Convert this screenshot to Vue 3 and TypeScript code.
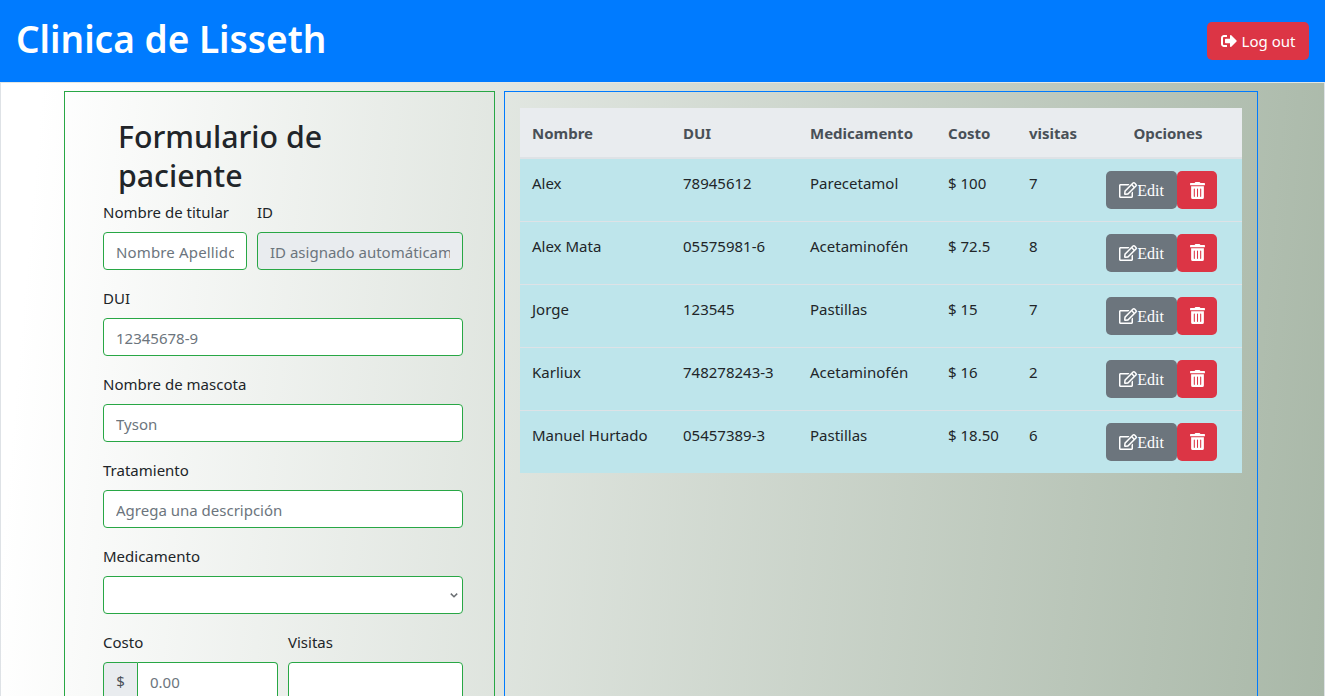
<script setup lang="ts">
interface Paciente {
  nombre: string
  dui: string
  medicamento: string
  costo: string
  visitas: number
}

const pacientes: Paciente[] = [
  { nombre: 'Alex', dui: '78945612', medicamento: 'Parecetamol', costo: '100', visitas: 7 },
  { nombre: 'Alex Mata', dui: '05575981-6', medicamento: 'Acetaminofén', costo: '72.5', visitas: 8 },
  { nombre: 'Jorge', dui: '123545', medicamento: 'Pastillas', costo: '15', visitas: 7 },
  { nombre: 'Karliux', dui: '748278243-3', medicamento: 'Acetaminofén', costo: '16', visitas: 2 },
  { nombre: 'Manuel Hurtado', dui: '05457389-3', medicamento: 'Pastillas', costo: '18.50', visitas: 6 }
]
</script>

<template>
  <div class="page">
    <header class="topbar">
      <h1>Clinica de Lisseth</h1>
      <button class="btn btn-danger logout" type="button">
        <svg class="ico-logout" viewBox="0 0 512 512"><path fill="currentColor" d="M497 273L329 441c-15 15-41 4.5-41-17v-96H152c-13.3 0-24-10.7-24-24v-96c0-13.3 10.7-24 24-24h136V88c0-21.4 25.9-32 41-17l168 168c9.3 9.4 9.3 24.6 0 34zM192 436v-40c0-6.6-5.4-12-12-12H96c-17.7 0-32-14.3-32-32V160c0-17.7 14.3-32 32-32h84c6.6 0 12-5.4 12-12V76c0-6.6-5.4-12-12-12H96c-53 0-96 43-96 96v192c0 53 43 96 96 96h84c6.6 0 12-5.4 12-12z"/></svg>
        Log out
      </button>
    </header>

    <main class="content">
      <section class="panel form-panel">
        <h2>Formulario de paciente</h2>
        <div class="field-row first">
          <div class="field">
            <label>Nombre de titular</label>
            <input class="titular" type="text" placeholder="Nombre Apellido" />
          </div>
          <div class="field">
            <label>ID</label>
            <input class="readonly" type="text" placeholder="ID asignado automáticamente" readonly />
          </div>
        </div>
        <div class="field">
          <label>DUI</label>
          <input type="text" placeholder="12345678-9" />
        </div>
        <div class="field">
          <label>Nombre de mascota</label>
          <input type="text" placeholder="Tyson" />
        </div>
        <div class="field">
          <label>Tratamiento</label>
          <input type="text" placeholder="Agrega una descripción" />
        </div>
        <div class="field">
          <label>Medicamento</label>
          <div class="select">
            <svg viewBox="0 0 4 5"><path fill="none" stroke="#6b6f73" stroke-width=".75" d="M.4 1.8L2 3.4l1.6-1.6"/></svg>
          </div>
        </div>
        <div class="field-row even">
          <div class="field">
            <label>Costo</label>
            <div class="input-group">
              <span>$</span>
              <input type="text" placeholder="0.00" />
            </div>
          </div>
          <div class="field">
            <label>Visitas</label>
            <input type="text" />
          </div>
        </div>
      </section>

      <section class="panel table-panel">
        <table>
          <colgroup>
            <col style="width: 151px" />
            <col style="width: 127px" />
            <col style="width: 138px" />
            <col style="width: 81px" />
            <col style="width: 77px" />
            <col />
          </colgroup>
          <thead>
            <tr>
              <th>Nombre</th>
              <th>DUI</th>
              <th>Medicamento</th>
              <th>Costo</th>
              <th>visitas</th>
              <th class="center">Opciones</th>
            </tr>
          </thead>
          <tbody>
            <tr v-for="p in pacientes" :key="p.dui">
              <td>{{ p.nombre }}</td>
              <td>{{ p.dui }}</td>
              <td>{{ p.medicamento }}</td>
              <td>$ {{ p.costo }}</td>
              <td>{{ p.visitas }}</td>
              <td class="actions">
                <button class="btn btn-edit" type="button">
                  <svg class="ico-edit" viewBox="0 0 576 512"><path fill="currentColor" d="M402.3 344.9l32-32c5-5 13.7-1.5 13.7 5.7V464c0 26.5-21.5 48-48 48H48c-26.5 0-48-21.5-48-48V112c0-26.5 21.5-48 48-48h273.5c7.1 0 10.7 8.6 5.7 13.7l-32 32c-1.5 1.5-3.5 2.3-5.7 2.3H48v352h352V350.5c0-2.1.8-4.1 2.3-5.6zm156.6-201.8L296.3 405.7l-90.4 10c-26.2 2.9-48.5-19.2-45.6-45.6l10-90.4L432.9 17.1c22.9-22.9 59.9-22.9 82.7 0l43.2 43.2c22.9 22.9 22.9 60 .1 82.8zM460.1 174L402 115.9 216.2 301.8l-7.3 65.3 65.3-7.3L460.1 174zm64.8-79.7l-43.2-43.2c-4.1-4.1-10.8-4.1-14.8 0L436 82l58.1 58.1 30.9-30.9c4-4.2 4-10.8-.1-14.9z"/></svg>Edit
                </button>
                <button class="btn btn-danger btn-trash" type="button">
                  <svg class="ico-trash" viewBox="0 0 448 512"><path fill="currentColor" d="M32 464a48 48 0 0 0 48 48h288a48 48 0 0 0 48-48V128H32zm272-256a16 16 0 0 1 32 0v224a16 16 0 0 1-32 0zm-96 0a16 16 0 0 1 32 0v224a16 16 0 0 1-32 0zm-96 0a16 16 0 0 1 32 0v224a16 16 0 0 1-32 0zM432 32H312l-9.4-18.7A24 24 0 0 0 281.1 0H166.8a23.72 23.72 0 0 0-21.4 13.3L136 32H16A16 16 0 0 0 0 48v32a16 16 0 0 0 16 16h416a16 16 0 0 0 16-16V48a16 16 0 0 0-16-16z"/></svg>
                </button>
              </td>
            </tr>
          </tbody>
        </table>
      </section>
    </main>
  </div>
</template>

<style>
html,
body {
  margin: 0;
  overflow: hidden;
}
</style>

<style scoped>
.page {
  height: 696px;
  overflow: hidden;
  font-family: "Noto Sans", "Open Sans", sans-serif;
  font-size: 15px;
  color: #212529;
  box-sizing: border-box;
}
.topbar {
  height: 82px;
  background: #007bff;
  display: flex;
  align-items: center;
  justify-content: space-between;
  padding: 0 16px;
  box-sizing: border-box;
}
.topbar h1 {
  margin: 0 0 5px;
  color: #fff;
  font-size: 37px;
  font-weight: 600;
  line-height: 72px;
}
.btn {
  border: 0;
  border-radius: 5px;
  color: #fff;
  font-family: inherit;
  height: 38px;
  padding: 0;
  display: inline-flex;
  align-items: center;
  justify-content: center;
  vertical-align: top;
}
.btn-danger {
  background: #dc3545;
}
.logout {
  width: 102px;
  font-size: 15px;
}
.ico-logout {
  width: 16px;
  height: 16px;
  margin-right: 5px;
}
.content {
  height: 614px;
  box-sizing: border-box;
  border-left: 1px solid #dee2e6;
  border-right: 1px solid #dee2e6;
  border-top: 1px solid #e4e7e4;
  padding: 8px 66px 0 63px;
  display: flex;
  gap: 9px;
  align-items: flex-start;
  background: linear-gradient(95deg, #fff 3%, #a9b8a8 100%);
}
.panel {
  box-sizing: border-box;
  height: 700px;
  flex: none;
}
.form-panel {
  width: 431px;
  border: 1px solid #28a745;
  padding: 26px 31px 0 38px;
}
.form-panel h2 {
  margin: 0 0 5px 15px;
  font-size: 30.3px;
  font-weight: 500;
  line-height: 38.5px;
  width: 240px;
}
.field {
  display: flex;
  flex-direction: column;
  margin-bottom: 16px;
}
.field label {
  line-height: 24px;
  margin-bottom: 8px;
}
.field-row {
  display: flex;
  gap: 10px;
}
.field-row.first .field:first-child {
  width: 144px;
  flex: none;
}
.field-row.first .field:last-child {
  flex: 1;
  min-width: 0;
}
.field-row.even .field {
  flex: 1;
  min-width: 0;
}
input,
.select {
  box-sizing: border-box;
  height: 38px;
  width: 100%;
  min-width: 0;
  border: 1px solid #28a745;
  border-radius: 4px;
  background: #fff;
  padding: 1px 12px 0;
  font-family: inherit;
  font-size: 15px;
  color: #495057;
  outline: none;
}
input::placeholder {
  color: #6c757d;
  opacity: 1;
}
input.titular::placeholder {
  letter-spacing: 0.15px;
}
input.readonly {
  background: #e9ecef;
}
.select {
  display: flex;
  align-items: center;
  justify-content: flex-end;
  padding: 0 4px 0 0;
}
.select svg {
  width: 8px;
  height: 10px;
}
.input-group {
  display: flex;
  height: 38px;
}
.input-group span {
  box-sizing: border-box;
  width: 35px;
  flex: none;
  display: flex;
  align-items: center;
  justify-content: center;
  background: #e9ecef;
  border: 1px solid #28a745;
  border-radius: 4px 0 0 4px;
  color: #495057;
}
.input-group input {
  border-left: 0;
  border-radius: 0 4px 4px 0;
}
.table-panel {
  width: 754px;
  border: 1px solid #007bff;
  padding: 16px 15px 0 15px;
}
table {
  width: 722px;
  table-layout: fixed;
  border-collapse: collapse;
}
th {
  height: 50px;
  box-sizing: border-box;
  padding: 0 12px;
  text-align: left;
  font-weight: 700;
  color: #495057;
  background: #e9ecef;
  border-bottom: 2px solid #dee2e6;
}
th.center {
  text-align: center;
}
td {
  height: 63px;
  box-sizing: border-box;
  padding: 12px 12px 0;
  vertical-align: top;
  line-height: 24px;
  background: #bee5eb;
  border-top: 1px solid #dee2e6;
  white-space: nowrap;
}
.actions {
  font-size: 0;
}
.btn-edit {
  width: 71px;
  padding-top: 2px;
  background: #6c757d;
  font-family: "Liberation Serif", serif;
  font-size: 16px;
  font-weight: 400;
}
.ico-edit {
  width: 18px;
  height: 16px;
  margin-bottom: 2px;
}
.btn-trash {
  width: 40px;
}
.ico-trash {
  width: 15px;
  height: 17px;
}
</style>
